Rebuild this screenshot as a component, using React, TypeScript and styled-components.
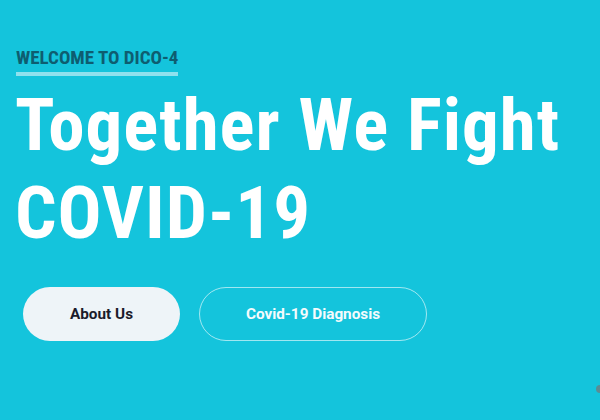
import React from "react";
import styled, { createGlobalStyle } from "styled-components";

const Global = createGlobalStyle`
  html, body { margin: 0; padding: 0; }
  body { background: #14c4dc; overflow: hidden; }
  * { box-sizing: border-box; }
`;

const Hero = styled.section`
  position: relative;
  width: 600px;
  height: 420px;
  background: #14c4dc;
  padding: 48px 0 0 16px;
  display: flex;
  flex-direction: column;
  font-family: "Roboto Condensed", "Roboto", "Liberation Sans", sans-serif;
`;

const Eyebrow = styled.div`
  align-self: flex-start;
  display: flex;
  flex-direction: column;
  gap: 4px;
`;

const EyebrowText = styled.span`
  font-family: "Roboto Condensed", "Roboto", sans-serif;
  font-stretch: condensed;
  font-weight: 700;
  font-size: 19px;
  line-height: 20px;
  color: #0e5d70;
`;

const Bar = styled.span`
  display: block;
  height: 4px;
  background: #8fe1ee;
`;

const Title = styled.h1`
  margin: 5px 0 0 -1px;
  font-family: "Roboto Condensed", "Roboto", sans-serif;
  font-stretch: condensed;
  font-weight: 700;
  font-size: 73px;
  line-height: 88px;
  color: #ffffff;
  letter-spacing: 1px;
`;

const Actions = styled.div`
  display: flex;
  gap: 19px;
  margin-top: 30px;
  padding-left: 7px;
`;

const Button = styled.button<{ $variant: "solid" | "outline" }>`
  height: 54px;
  border-radius: 27px;
  font-family: "Roboto", sans-serif;
  font-weight: 700;
  font-size: 15.3px;
  cursor: pointer;
  width: ${(p) => (p.$variant === "solid" ? "157px" : "228px")};
  background: ${(p) => (p.$variant === "solid" ? "#eef4f8" : "transparent")};
  color: ${(p) => (p.$variant === "solid" ? "#1b1b2b" : "#f4fbfd")};
  border: ${(p) =>
    p.$variant === "solid" ? "none" : "1px solid rgba(255,255,255,0.6)"};
`;

const Dot = styled.span`
  position: absolute;
  right: -4px;
  top: 385px;
  width: 8px;
  height: 8px;
  border-radius: 50%;
  background: #5b8c94;
`;

export default function App() {
  return (
    <>
      <Global />
      <Hero>
        <Eyebrow>
          <EyebrowText>WELCOME TO DICO-4</EyebrowText>
          <Bar />
        </Eyebrow>
        <Title>
          Together We Fight
          <br />
          COVID-19
        </Title>
        <Actions>
          <Button $variant="solid">About Us</Button>
          <Button $variant="outline">Covid-19 Diagnosis</Button>
        </Actions>
        <Dot />
      </Hero>
    </>
  );
}
